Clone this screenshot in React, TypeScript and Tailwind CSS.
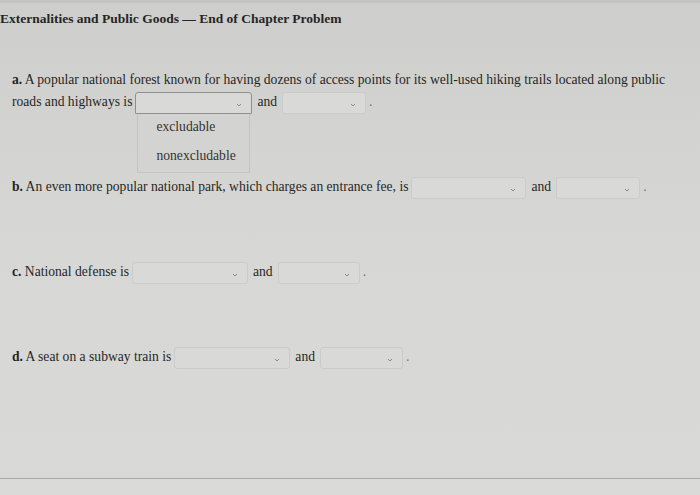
import React from "react";

type DropProps = { w: string; open?: boolean };

function Caret() {
  return (
    <svg width="6" height="4" viewBox="0 0 6 4" className="absolute right-[10px] top-[11px]">
      <path d="M1 1 L3 3 L5 1" fill="none" stroke="#8a8c89" strokeWidth="1" />
    </svg>
  );
}

function Drop({ w, open }: DropProps) {
  return (
    <span className={`relative mx-[3px] inline-block h-[22px] align-middle ${w}`}>
      <span
        className={`absolute inset-0 rounded-[3px] border bg-[#d9dad7] ${
          open ? "border-[#8f918e] rounded-b-none" : "border-[#cbccc9]"
        }`}
      />
      <Caret />
      {open && (
        <span className="absolute left-[2px] right-[2px] top-[22px] z-10 flex h-[59px] flex-col border border-t-0 border-[#c4c5c2] bg-[#d3d4d1] text-[13.6px] text-[#333]">
          <span className="pl-[18px] pt-[2px]">excludable</span>
          <span className="pl-[18px] pt-[7px]">nonexcludable</span>
        </span>
      )}
    </span>
  );
}

function Blank({ first = "w-[117px]", second = "w-[84px]", open = false }) {
  return (
    <>
      <Drop w={first} open={open} />
      <span className="mx-[2px] align-top">and</span>
      <Drop w={second} />
      <span className="text-[#777]">.</span>
    </>
  );
}

export default function App() {
  return (
    <div
      className="h-[495px] w-[700px] overflow-hidden bg-gradient-to-b from-[#cecfcc] via-[#d7d8d5] to-[#d9dad7] text-[#262626]"
      style={{ fontFamily: '"Liberation Serif", "Times New Roman", serif' }}
    >
      <div className="h-[3px] bg-[#c4c5c2]" />
      <div className="flex h-[475px] flex-col">
        <h1 className="mt-[5px] h-[22px] text-[13.5px] font-bold leading-[22px]">
          Externalities and Public Goods — End of Chapter Problem
        </h1>
        <div className="flex flex-col gap-[62px] pl-[12px] pt-[39px] text-[13.6px] leading-[22px]">
          <p className="w-[676px]">
            <b>a.</b> A popular national forest known for having dozens of access points for its well-used hiking
            trails located along public roads and highways is
            <Blank open />
          </p>
          <p>
            <b>b.</b> An even more popular national park, which charges an entrance fee, is
            <Blank first="w-[115px]" second="w-[84px]" />
          </p>
          <p>
            <b>c.</b> National defense is
            <Blank first="w-[116px]" second="w-[82px]" />
          </p>
          <p>
            <b>d.</b> A seat on a subway train is
            <Blank first="w-[116px]" second="w-[83px]" />
          </p>
        </div>
      </div>
      <div className="h-px bg-[#a6a8a5]" />
      <div className="h-[16px] bg-[#dadbd8]" />
    </div>
  );
}
